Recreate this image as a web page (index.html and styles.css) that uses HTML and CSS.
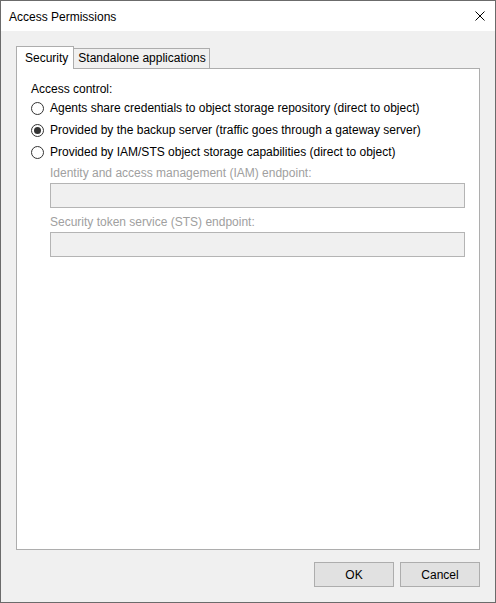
FILE: index.html
```html
<!DOCTYPE html>
<html>
<head>
<meta charset="utf-8">
<title>Access Permissions</title>
<link rel="stylesheet" href="styles.css">
</head>
<body>
<div class="window">
  <div class="titlebar">
    <span class="title">Access Permissions</span>
    <span class="close">
      <svg width="10" height="10" viewBox="0 0 10 10"><path d="M0.5 0.5 L9.5 9.5 M9.5 0.5 L0.5 9.5" stroke="#000" stroke-width="1" fill="none"/></svg>
    </span>
  </div>
  <div class="content">
    <div class="tabstrip">
      <div class="tab active">Security</div>
      <div class="tab">Standalone applications</div>
    </div>
    <div class="panel">
      <div class="group-label">Access control:</div>
      <div class="radio-row"><span class="radio"></span><span class="rlabel">Agents share credentials to object storage repository (direct to object)</span></div>
      <div class="radio-row"><span class="radio checked"></span><span class="rlabel">Provided by the backup server (traffic goes through a gateway server)</span></div>
      <div class="radio-row"><span class="radio"></span><span class="rlabel">Provided by IAM/STS object storage capabilities (direct to object)</span></div>
      <div class="sub">
        <div class="field-label">Identity and access management (IAM) endpoint:</div>
        <div class="field"></div>
        <div class="field-label">Security token service (STS) endpoint:</div>
        <div class="field"></div>
      </div>
    </div>
    <div class="buttons">
      <div class="btn">OK</div>
      <div class="btn">Cancel</div>
    </div>
  </div>
</div>
</body>
</html>
```
FILE: styles.css
```css
* { box-sizing: border-box; }
html, body { margin: 0; padding: 0; background: #f0f0f0; }
body {
  font-family: "Liberation Sans", Arial, sans-serif;
  font-size: 12px;
  line-height: 16px;
  color: #000;
}
.window {
  width: 496px;
  height: 603px;
  border: 1px solid #6b6b6b;
  display: flex;
  flex-direction: column;
  background: #f0f0f0;
}
.titlebar {
  height: 30px;
  background: #fff;
  display: flex;
  align-items: center;
  justify-content: space-between;
  padding: 2px 10px 0 8px;
}
.close { display: flex; width: 10px; height: 10px; margin-top: -2px; }
.content {
  flex: 1;
  display: flex;
  flex-direction: column;
  padding: 15px 15px 15px 15px;
}
.tabstrip {
  display: flex;
  align-items: flex-end;
  height: 22px;
}
.tab {
  background: #f0f0f0;
  border: 1px solid #adadad;
  border-left: none;
  border-bottom: none;
  padding: 1px 3px 2px 4px;
  white-space: nowrap;
}
.tab.active {
  background: #fff;
  border-left: 1px solid #adadad;
  padding: 3px 5px 3px 8px;
  margin-bottom: -1px;
  position: relative;
  z-index: 1;
}
.panel {
  flex: 1;
  background: #fff;
  border: 1px solid #adadad;
  padding: 12px 14px 0 14px;
}
.radio-row {
  display: flex;
  align-items: center;
  height: 22px;
}
.radio {
  width: 13px;
  height: 13px;
  border: 1px solid #333;
  border-radius: 50%;
  background: #fff;
  margin-right: 6px;
  display: flex;
  align-items: center;
  justify-content: center;
}
.radio.checked::after {
  content: "";
  width: 7px;
  height: 7px;
  border-radius: 50%;
  background: #333;
}
.rlabel { white-space: nowrap; }
.sub {
  padding-left: 19px;
  padding-top: 2px;
}
.field-label {
  color: #a0a0a0;
  white-space: nowrap;
}
.field {
  height: 25px;
  background: #f0f0f0;
  border: 1px solid #b4b4b4;
  margin-top: 2px;
  margin-bottom: 6px;
}
.buttons {
  display: flex;
  justify-content: flex-end;
  gap: 6px;
  margin-top: 12px;
}
.btn {
  width: 80px;
  height: 25px;
  background: #e1e1e1;
  border: 1px solid #adadad;
  display: flex;
  align-items: center;
  justify-content: center;
}
```
